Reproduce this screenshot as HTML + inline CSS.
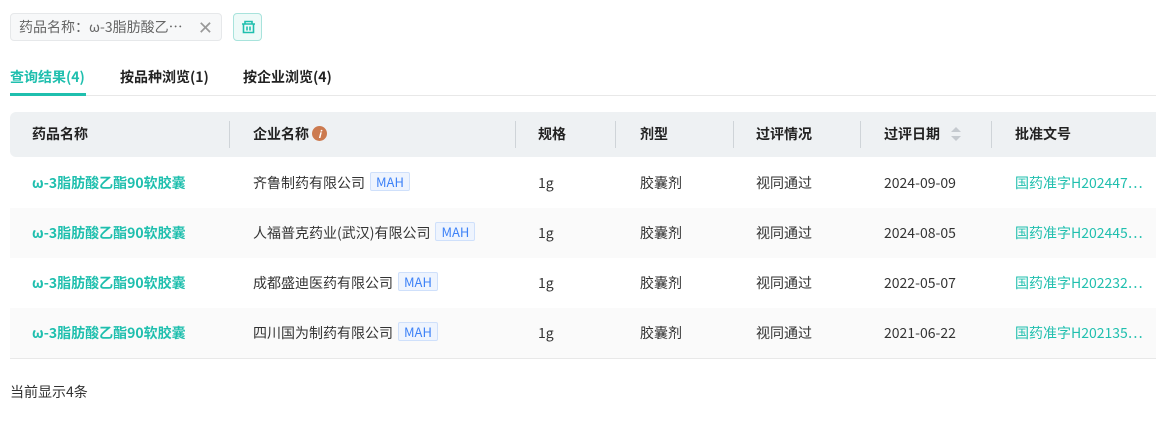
<!DOCTYPE html>
<html><head><meta charset="utf-8"><style>
*{box-sizing:border-box;margin:0;padding:0}
body{width:1156px;height:421px;background:#fff;font-family:"Noto Sans CJK SC",sans-serif;color:#333;font-size:14px;position:relative;overflow:hidden}
.abs{position:absolute}
.chip{left:10px;top:13px;width:212px;height:28px;border:1px solid #e6e8ea;background:#f7f8f9;border-radius:4px;color:#666;font-size:14px;line-height:26px;padding-left:8px}
.chip .x{position:absolute;right:8px;top:0;color:#999;font-size:18px}
.trash{left:233px;top:13px;width:29px;height:28px;border:1px solid #a8e3dc;background:#eefaf8;border-radius:4px}
.tabs{top:67px;font-size:14px;font-weight:bold;color:#222}
.tabline{left:10px;top:95px;width:1146px;height:1px;background:#e8e8e8}
.act{left:10px;top:93px;width:76px;height:3px;background:#1fbfae}
.thead{left:10px;top:112px;width:1146px;height:45px;background:#eef1f3;border-radius:6px 0 0 6px}
.th{top:112px;line-height:45px;font-weight:bold;color:#222;font-size:14px}
.sep{top:121px;width:1px;height:27px;background:#cfd4d8}
.row{left:10px;width:1146px;height:50px}
.td{line-height:50px;font-size:14px;color:#333}
.g{color:#1fbfae}
.b{font-weight:bold}
.mah{display:inline-block;border:1px solid #cfe0fb;background:#eef4fe;color:#3e82f7;font-size:13px;line-height:17px;padding:0 5px;margin-left:5px;border-radius:2px;vertical-align:1px}
</style></head><body>
<div class="abs chip">药品名称：ω-3脂肪酸乙…<span class="x">✕</span></div>
<div class="abs trash"><svg width="29" height="28" viewBox="0 0 29 28"><g fill="none" stroke="#1fbfae" stroke-width="1.6"><path d="M8 10h13M9.5 10v8.5h10v-8.5M13 12.5v4M16 12.5v4M11 10V7.5h7V10"/></g></svg></div>
<div class="abs tabs g" style="left:10px;color:#1fbfae">查询结果(4)</div>
<div class="abs tabs" style="left:120px">按品种浏览(1)</div>
<div class="abs tabs" style="left:243px">按企业浏览(4)</div>
<div class="abs tabline"></div><div class="abs act"></div>
<div class="abs thead"></div>
<div class="abs th" style="left:32px">药品名称</div>
<div class="abs th" style="left:253px">企业名称 <span style="display:inline-block;width:15px;height:15px;border-radius:50%;background:#cc7a4f;color:#fff;font-size:10px;line-height:15px;text-align:center;font-style:italic;vertical-align:1px">i</span></div>
<div class="abs th" style="left:538px">规格</div>
<div class="abs th" style="left:640px">剂型</div>
<div class="abs th" style="left:756px">过评情况</div>
<div class="abs th" style="left:884px">过评日期</div>
<div class="abs" style="left:951px;top:127px;width:0;height:0;border:5px solid transparent;border-bottom:5px solid #c5cacf;border-top:0"></div>
<div class="abs" style="left:951px;top:136px;width:0;height:0;border:5px solid transparent;border-top:5px solid #c5cacf;border-bottom:0"></div>
<div class="abs th" style="left:1015px">批准文号</div>
<div class="abs sep" style="left:229px"></div><div class="abs sep" style="left:515px"></div><div class="abs sep" style="left:615px"></div><div class="abs sep" style="left:733px"></div><div class="abs sep" style="left:860px"></div><div class="abs sep" style="left:991px"></div>

<div class="abs row" style="top:208px;background:#fafafa"></div>
<div class="abs row" style="top:308px;background:#fafafa"></div>
<div class="abs" style="left:10px;top:358px;width:1146px;height:1px;background:#e8e8e8"></div>

<div class="abs td g b" style="left:32px;top:158px">ω-3脂肪酸乙酯90软胶囊</div>
<div class="abs td" style="left:253px;top:158px">齐鲁制药有限公司<span class="mah">MAH</span></div>
<div class="abs td" style="left:538px;top:158px">1g</div><div class="abs td" style="left:640px;top:158px">胶囊剂</div><div class="abs td" style="left:756px;top:158px">视同通过</div><div class="abs td" style="left:884px;top:158px">2024-09-09</div><div class="abs td g" style="left:1015px;top:158px">国药准字H202447…</div>

<div class="abs td g b" style="left:32px;top:208px">ω-3脂肪酸乙酯90软胶囊</div>
<div class="abs td" style="left:253px;top:208px">人福普克药业(武汉)有限公司<span class="mah">MAH</span></div>
<div class="abs td" style="left:538px;top:208px">1g</div><div class="abs td" style="left:640px;top:208px">胶囊剂</div><div class="abs td" style="left:756px;top:208px">视同通过</div><div class="abs td" style="left:884px;top:208px">2024-08-05</div><div class="abs td g" style="left:1015px;top:208px">国药准字H202445…</div>

<div class="abs td g b" style="left:32px;top:258px">ω-3脂肪酸乙酯90软胶囊</div>
<div class="abs td" style="left:253px;top:258px">成都盛迪医药有限公司<span class="mah">MAH</span></div>
<div class="abs td" style="left:538px;top:258px">1g</div><div class="abs td" style="left:640px;top:258px">胶囊剂</div><div class="abs td" style="left:756px;top:258px">视同通过</div><div class="abs td" style="left:884px;top:258px">2022-05-07</div><div class="abs td g" style="left:1015px;top:258px">国药准字H202232…</div>

<div class="abs td g b" style="left:32px;top:308px">ω-3脂肪酸乙酯90软胶囊</div>
<div class="abs td" style="left:253px;top:308px">四川国为制药有限公司<span class="mah">MAH</span></div>
<div class="abs td" style="left:538px;top:308px">1g</div><div class="abs td" style="left:640px;top:308px">胶囊剂</div><div class="abs td" style="left:756px;top:308px">视同通过</div><div class="abs td" style="left:884px;top:308px">2021-06-22</div><div class="abs td g" style="left:1015px;top:308px">国药准字H202135…</div>

<div class="abs" style="left:10px;top:382px;font-size:14px;color:#333">当前显示4条</div>
</body></html>
